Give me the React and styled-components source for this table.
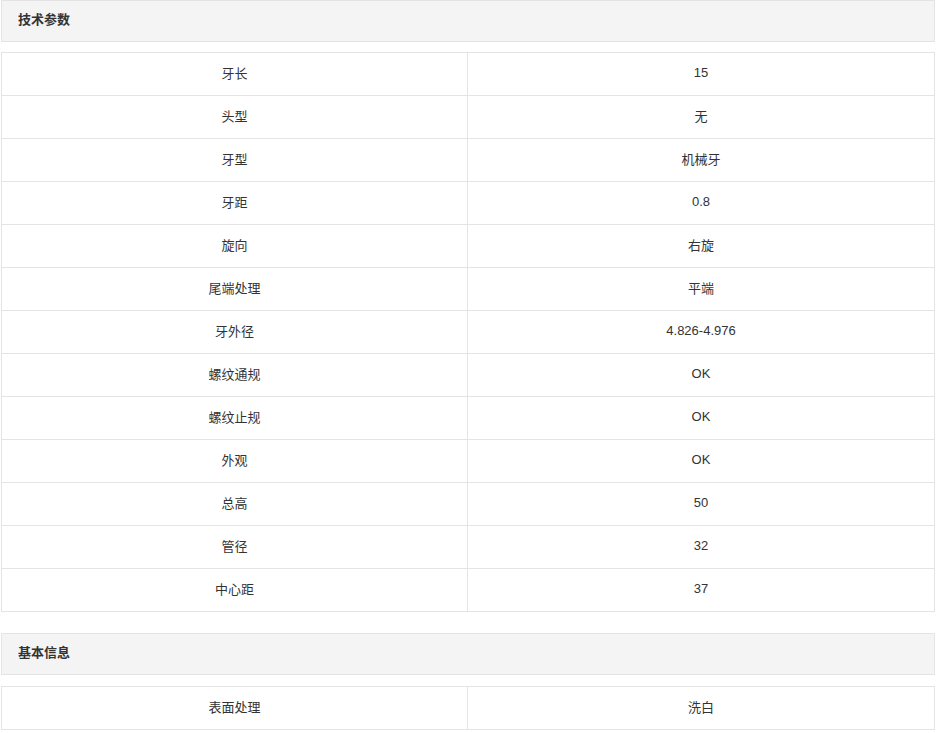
import React from "react";
import styled, { createGlobalStyle } from "styled-components";

const techParams = [
  ["牙长", "15"],
  ["头型", "无"],
  ["牙型", "机械牙"],
  ["牙距", "0.8"],
  ["旋向", "右旋"],
  ["尾端处理", "平端"],
  ["牙外径", "4.826-4.976"],
  ["螺纹通规", "OK"],
  ["螺纹止规", "OK"],
  ["外观", "OK"],
  ["总高", "50"],
  ["管径", "32"],
  ["中心距", "37"],
];

const baseInfo = [["表面处理", "洗白"]];

const Section = ({ title, rows, gap }) => (
  <SectionBox gap={gap}>
    <Header>{title}</Header>
    <Table>
      <colgroup>
        <col style={{ width: "466px" }} />
        <col />
      </colgroup>
      <tbody>
        {rows.map(([k, v]) => (
          <Row key={k}>
            <Cell>{k}</Cell>
            <Cell>{v}</Cell>
          </Row>
        ))}
      </tbody>
    </Table>
  </SectionBox>
);

const App = () => {
  return (
    <>
      <GlobalStyle />
      <Page>
        <Section title="技术参数" rows={techParams} gap={10} />
        <Section title="基本信息" rows={baseInfo} gap={11} />
      </Page>
    </>
  );
};

export default App;

const GlobalStyle = createGlobalStyle`
  body {
    margin: 0;
    background: #ffffff;
    font-family: "Liberation Sans", "Noto Sans CJK SC", sans-serif;
    color: #333333;
  }
`;
const Page = styled.div`
  display: flex;
  flex-direction: column;
  gap: 21px;
  width: 934px;
  padding: 0 1px;
`;
const SectionBox = styled.div`
  display: flex;
  flex-direction: column;
  gap: ${(p) => p.gap}px;
`;
const Header = styled.div`
  box-sizing: border-box;
  height: 42px;
  display: flex;
  align-items: center;
  padding-left: 16px;
  padding-bottom: 5px;
  background-color: #f4f4f4;
  border: 1px solid #e4e4e4;
  font-size: 13px;
  font-weight: 700;
  color: #333333;
`;
const Table = styled.table`
  width: 100%;
  border-collapse: collapse;
  table-layout: fixed;
`;
const Row = styled.tr`
  height: 43px;
`;
const Cell = styled.td`
  border: 1px solid #e4e4e4;
  text-align: center;
  vertical-align: middle;
  font-size: 13px;
  color: #333333;
  padding: 0 0 3px;
`;
